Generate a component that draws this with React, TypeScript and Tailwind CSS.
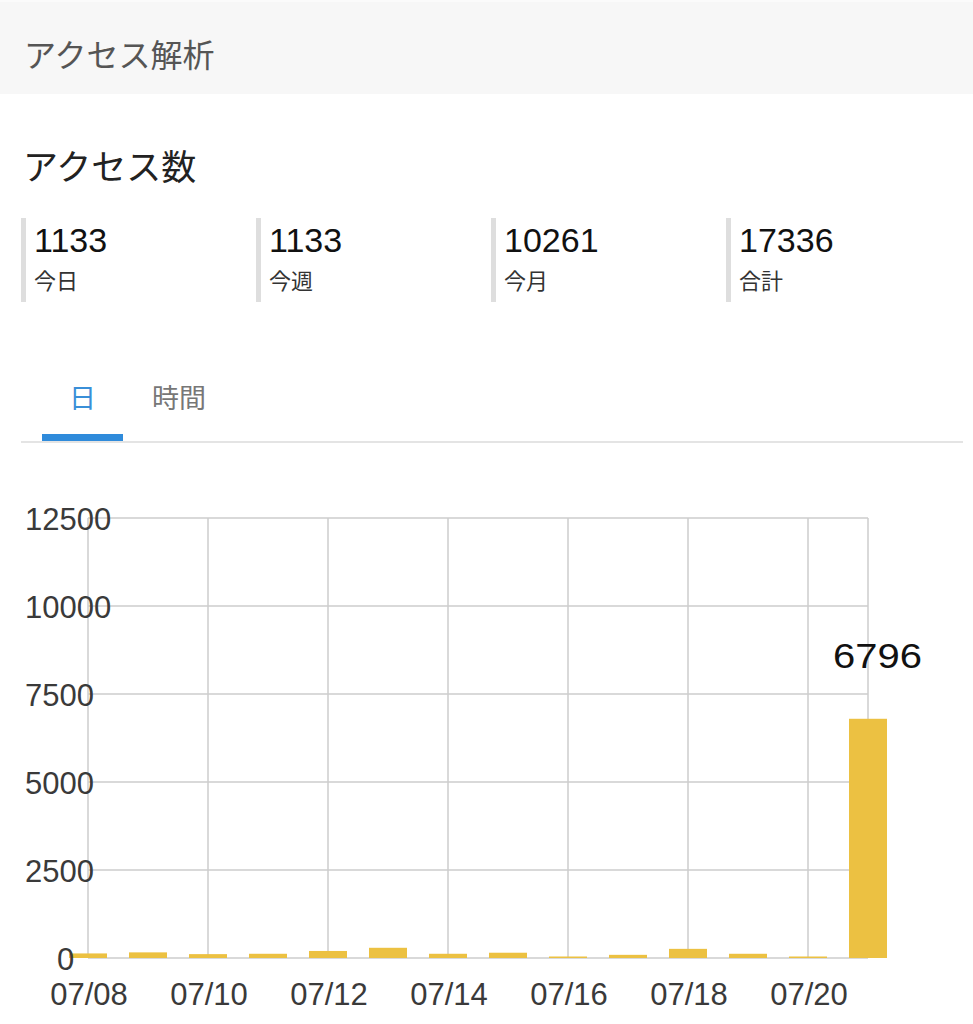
import React from 'react';

const stats = [
  { value: '1133', label: '今日' },
  { value: '1133', label: '今週' },
  { value: '10261', label: '今月' },
  { value: '17336', label: '合計' },
];

const daily = [130, 160, 110, 120, 200, 290, 120, 150, 30, 90, 260, 120, 40, 6796];

// chart coordinates are page pixels (viewBox starts where the chart block starts)
const X0 = 88;
const DAY = 60;
const BASE = 958;
const STEP = 88; // px per 2500
const yTicks = [
  { v: '12500', x: 25 },
  { v: '10000', x: 25 },
  { v: '7500', x: 25 },
  { v: '5000', x: 25 },
  { v: '2500', x: 25 },
  { v: '0', x: 57 },
];
const xLabels = ['07/08', '07/10', '07/12', '07/14', '07/16', '07/18', '07/20'];

const Chart = () => {
  const top = BASE - STEP * 5;
  return (
    <svg width="973" height="581" viewBox="0 443 973 581" className="block">
      {/* horizontal grid */}
      {yTicks.map((t, i) => (
        <line key={t.v} x1={X0} x2={868} y1={top + STEP * i} y2={top + STEP * i} stroke="#cdcdcd" strokeWidth="1.5" />
      ))}
      {/* vertical grid */}
      {[0, 1, 2, 3, 4, 5, 6].map((k) => (
        <line key={k} x1={X0 + k * 120} x2={X0 + k * 120} y1={top} y2={BASE} stroke="#cdcdcd" strokeWidth="1.5" />
      ))}
      <line x1={868} x2={868} y1={top} y2={BASE} stroke="#cdcdcd" strokeWidth="1.5" />

      {daily.map((v, i) => {
        const h = Math.max((v * STEP) / 2500, 1.5);
        return <rect key={i} x={X0 + i * DAY - 19} y={BASE - h} width={38} height={h} fill="#ecc142" />;
      })}

      {yTicks.map((t, i) => (
        <text key={t.v} x={t.x} y={top + STEP * i + 12} fontSize="31" fill="#3a3a3a" fontFamily="'Liberation Sans', sans-serif">
          {t.v}
        </text>
      ))}
      {xLabels.map((l, k) => (
        <text key={l} x={X0 + k * 120 + 1} y={1005} fontSize="31" fill="#3a3a3a" textAnchor="middle" fontFamily="'Liberation Sans', sans-serif">
          {l}
        </text>
      ))}
      <text x={833} y={668} fontSize="35" fill="#111" textLength="89" lengthAdjust="spacingAndGlyphs" fontFamily="'Liberation Sans', sans-serif">
        6796
      </text>
    </svg>
  );
};

export default function App() {
  return (
    <div className="w-[973px] h-[1024px] overflow-hidden bg-white font-['Liberation_Sans','Noto_Sans_CJK_JP',sans-serif]">
      <div className="h-[94px] bg-[#f7f7f7] border-t-2 border-[#fbfbfb] flex items-center pt-[16px] pl-[24px]">
        <span className="text-[32px] leading-[32px] text-[#555]">アクセス解析</span>
      </div>

      <h2 className="mt-[56px] pl-[23px] text-[35px] leading-[35px] text-[#222]">アクセス数</h2>

      <div className="mt-[33px] pl-[21px] flex">
        {stats.map((s) => (
          <div key={s.label} className="w-[235px] h-[84px] border-l-[5px] border-[#dedede] pl-[8px] pt-[5px]">
            <div className="text-[34px] leading-[34px] text-[#111]">{s.value}</div>
            <div className="mt-[14px] text-[22px] leading-[22px] text-[#333]">{s.label}</div>
          </div>
        ))}
      </div>

      <div className="mt-[70px] ml-[21px] mr-[10px] border-b-2 border-[#e4e4e4] flex pl-[21px]">
        <button className="w-[81px] pt-[14px] pb-[21px] border-b-[7px] border-[#2f8bdb] text-[27px] leading-[27px] text-[#3a8fd8]">
          日
        </button>
        <button className="w-[112px] pt-[14px] pb-[21px] border-b-[7px] border-transparent text-[27px] leading-[27px] text-[#777]">
          時間
        </button>
      </div>

      <Chart />
    </div>
  );
}
